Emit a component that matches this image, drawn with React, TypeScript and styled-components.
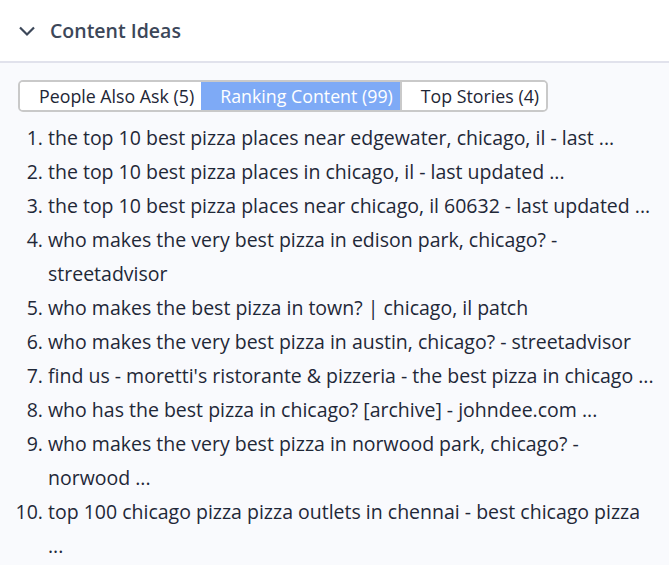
import styled, { createGlobalStyle } from 'styled-components';
import { useState } from 'react';

const GlobalStyle = createGlobalStyle`
  html, body {
    margin: 0;
    padding: 0;
    background: #f9fafd;
    font-family: 'Open Sans', 'Liberation Sans', sans-serif;
  }
`;

const Panel = styled.div`
  width: 669px;
  min-height: 565px;
  background: #f9fafd;
`;

const Header = styled.div`
  display: flex;
  align-items: center;
  gap: 14px;
  height: 63px;
  padding: 0 18px;
  background: #fff;
  border-bottom: 2px solid #e1e2ec;
  box-sizing: border-box;
`;

const Title = styled.h2`
  margin: 0;
  font-size: 19.5px;
  font-weight: 600;
  color: #3c4759;
`;

const Body = styled.div`
  padding: 17px 12px 0 18px;
`;

const Tabs = styled.div`
  display: inline-flex;
  border: 2px solid #c9c9c9;
  border-radius: 5px;
  overflow: hidden;
  background: #fff;
`;

const Tab = styled.button<{ $active?: boolean }>`
  font-family: inherit;
  font-size: 17.8px;
  line-height: 28px;
  padding: 0 7px 0 19px;
  border: 0;
  border-left: ${(p) => (p.$active ? '0' : '2px solid #c9c9c9')};
  &:first-child {
    border-left: 0;
  }
  background: ${(p) => (p.$active ? '#7eaaf6' : '#fff')};
  color: ${(p) => (p.$active ? '#fff' : '#1e2636')};
  cursor: pointer;
`;

const List = styled.ol`
  margin: 9px 0 0;
  padding-left: 30px;
  color: #1f2838;
  font-size: 19.5px;
  line-height: 34px;
`;

const Item = styled.li``;

const Chevron = () => (
  <svg width="18" height="12" viewBox="0 0 18 12">
    <path d="M2 2.5l7 7 7-7" fill="none" stroke="#3c4759" strokeWidth="2.2" />
  </svg>
);

const tabs = ['People Also Ask (5)', 'Ranking Content (99)', 'Top Stories (4)'];

const items = [
  'the top 10 best pizza places near edgewater, chicago, il - last ...',
  'the top 10 best pizza places in chicago, il - last updated ...',
  'the top 10 best pizza places near chicago, il 60632 - last updated ...',
  'who makes the very best pizza in edison park, chicago? - streetadvisor',
  'who makes the best pizza in town? | chicago, il patch',
  'who makes the very best pizza in austin, chicago? - streetadvisor',
  "find us - moretti's ristorante & pizzeria - the best pizza in chicago ...",
  'who has the best pizza in chicago? [archive] - johndee.com ...',
  'who makes the very best pizza in norwood park, chicago? - norwood ...',
  'top 100 chicago pizza pizza outlets in chennai - best chicago pizza ...',
];

export default function App() {
  const [active, setActive] = useState(1);
  return (
    <Panel>
      <GlobalStyle />
      <Header>
        <Chevron />
        <Title>Content Ideas</Title>
      </Header>
      <Body>
        <Tabs>
          {tabs.map((t, i) => (
            <Tab key={t} $active={i === active} onClick={() => setActive(i)}>
              {t}
            </Tab>
          ))}
        </Tabs>
        <List>
          {items.map((t) => (
            <Item key={t}>{t}</Item>
          ))}
        </List>
      </Body>
    </Panel>
  );
}
